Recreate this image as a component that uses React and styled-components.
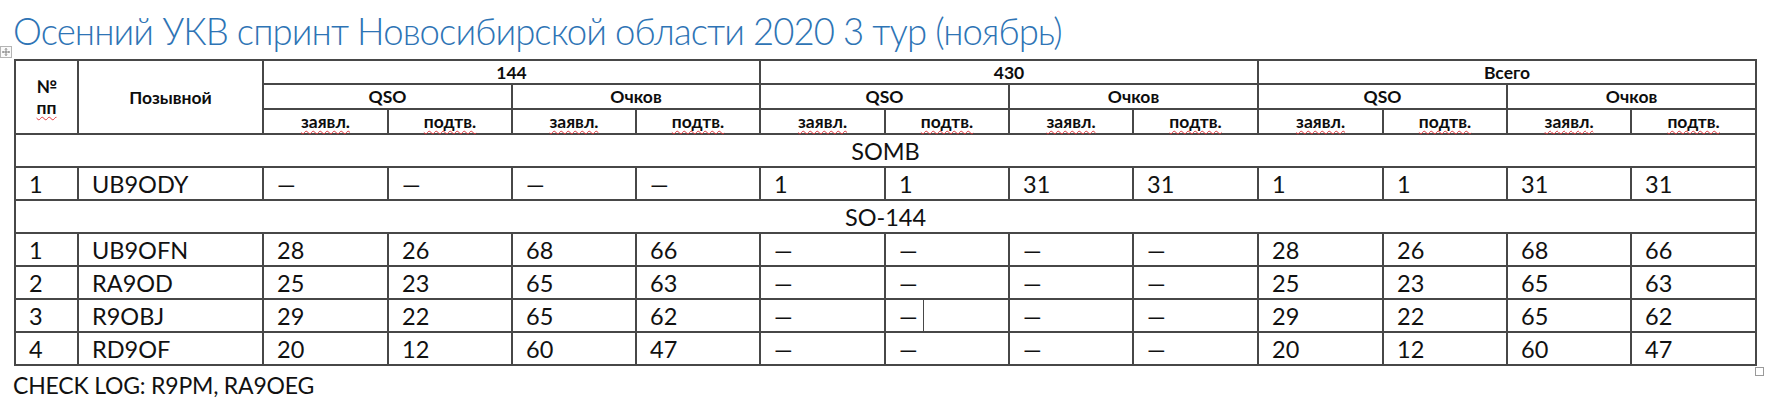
import React from "react";
import styled, { createGlobalStyle } from "styled-components";

const GlobalStyle = createGlobalStyle`
  html, body {
    margin: 0;
    padding: 0;
    background: #ffffff;
  }
  body {
    font-family: Lato, "Liberation Sans", sans-serif;
    color: #111111;
  }
`;

const Page = styled.div`
  width: 1772px;
  box-sizing: border-box;
  padding-left: 14px;
`;

const Title = styled.h1`
  margin: 0 0 0 -1px;
  height: 59px;
  padding-top: 9px;
  box-sizing: border-box;
  font-family: Lato, "Liberation Sans", sans-serif;
  font-weight: 300;
  font-size: 36.5px;
  letter-spacing: -0.9px;
  line-height: 44px;
  color: #2e74b5;
  white-space: nowrap;
`;

const TableWrap = styled.div`
  position: relative;
  width: 1741px;
`;

const MoveHandle = styled.div`
  position: absolute;
  left: -14px;
  top: -13px;
  width: 10px;
  height: 10px;
  display: flex;
  align-items: center;
  justify-content: center;
  border: 1px solid #b4b4b4;
  background: #fafafa;
`;

const ResizeHandle = styled.div`
  position: absolute;
  right: -9px;
  bottom: -10px;
  width: 7px;
  height: 7px;
  border: 1px solid #9a9a9a;
  background: #ffffff;
`;

const Grid = styled.table`
  width: 1741px;
  border-collapse: collapse;
  table-layout: fixed;
`;

const HeadCell = styled.th`
  border: 2px solid #474747;
  padding: 0;
  height: ${(p) => p.$h || 23}px;
  font-size: 17.5px;
  font-weight: 700;
  line-height: 21px;
  text-align: center;
  vertical-align: middle;
  color: #0d0d0d;
`;

const Spell = styled.span`
  text-decoration: underline wavy #e0393e;
  text-decoration-thickness: 1px;
  text-decoration-skip-ink: none;
  text-underline-offset: 2px;
`;

const SectionCell = styled.td`
  border: 2px solid #474747;
  height: 31px;
  padding: 0;
  font-size: 23.5px;
  text-align: center;
  vertical-align: middle;
`;

const Cell = styled.td`
  position: relative;
  border: 2px solid #474747;
  height: 31px;
  padding: 0 0 0 13px;
  font-size: 23.5px;
  line-height: 28px;
  text-align: left;
  vertical-align: middle;
  white-space: nowrap;

  ${(p) =>
    p.$split &&
    `
    &::after {
      content: "";
      position: absolute;
      left: 37px;
      top: 0;
      bottom: 0;
      border-left: 1px solid #474747;
    }
  `}
`;

const Note = styled.div`
  font-size: 23px;
  letter-spacing: -0.2px;
  line-height: 30px;
  padding-top: 4px;
  margin-left: -1px;
`;

const widths = [63, 185, 125, 124, 124, 124, 125, 124, 124, 125, 125, 124, 124, 125];

const sections = [
  {
    title: "SOMB",
    rows: [["1", "UB9ODY", "—", "—", "—", "—", "1", "1", "31", "31", "1", "1", "31", "31"]],
  },
  {
    title: "SO-144",
    rows: [
      ["1", "UB9OFN", "28", "26", "68", "66", "—", "—", "—", "—", "28", "26", "68", "66"],
      ["2", "RA9OD", "25", "23", "65", "63", "—", "—", "—", "—", "25", "23", "65", "63"],
      ["3", "R9OBJ", "29", "22", "65", "62", "—", "—", "—", "—", "29", "22", "65", "62"],
      ["4", "RD9OF", "20", "12", "60", "47", "—", "—", "—", "—", "20", "12", "60", "47"],
    ],
  },
];

const bands = ["144", "430", "Всего"];

const MoveIcon = () => (
  <svg width="8" height="8" viewBox="0 0 8 8" fill="none" stroke="#6b6b6b" strokeWidth="0.8">
    <path d="M4 0.5V7.5M0.5 4H7.5" />
    <path d="M3 1.5L4 0.5L5 1.5M3 6.5L4 7.5L5 6.5M1.5 3L0.5 4L1.5 5M6.5 3L7.5 4L6.5 5" />
  </svg>
);

const App = () => {
  return (
    <Page>
      <GlobalStyle />
      <Title>Осенний УКВ спринт Новосибирской области 2020 3 тур (ноябрь)</Title>

      <TableWrap>
        <MoveHandle>
          <MoveIcon />
        </MoveHandle>

        <Grid>
          <colgroup>
            {widths.map((w, i) => (
              <col key={i} style={{ width: w }} />
            ))}
          </colgroup>
          <thead>
            <tr>
              <HeadCell rowSpan={3}>
                №
                <br />
                <Spell>пп</Spell>
              </HeadCell>
              <HeadCell rowSpan={3}>Позывной</HeadCell>
              {bands.map((b) => (
                <HeadCell key={b} colSpan={4} $h={22}>
                  {b}
                </HeadCell>
              ))}
            </tr>
            <tr>
              {bands.map((b) => (
                <React.Fragment key={b}>
                  <HeadCell colSpan={2} $h={23}>
                    QSO
                  </HeadCell>
                  <HeadCell colSpan={2} $h={23}>
                    Очков
                  </HeadCell>
                </React.Fragment>
              ))}
            </tr>
            <tr>
              {Array.from({ length: 6 }).map((_, i) => (
                <React.Fragment key={i}>
                  <HeadCell $h={23}>
                    <Spell>заявл.</Spell>
                  </HeadCell>
                  <HeadCell $h={23}>
                    <Spell>подтв.</Spell>
                  </HeadCell>
                </React.Fragment>
              ))}
            </tr>
          </thead>
          <tbody>
            {sections.map((s) => (
              <React.Fragment key={s.title}>
                <tr>
                  <SectionCell colSpan={14}>{s.title}</SectionCell>
                </tr>
                {s.rows.map((row) => (
                  <tr key={row[1]}>
                    {row.map((v, i) => (
                      <Cell key={i} $split={row[1] === "R9OBJ" && i === 7}>
                        {v}
                      </Cell>
                    ))}
                  </tr>
                ))}
              </React.Fragment>
            ))}
          </tbody>
        </Grid>

        <ResizeHandle />
      </TableWrap>

      <Note>CHECK LOG: R9PM, RA9OEG</Note>
    </Page>
  );
};

export default App;
